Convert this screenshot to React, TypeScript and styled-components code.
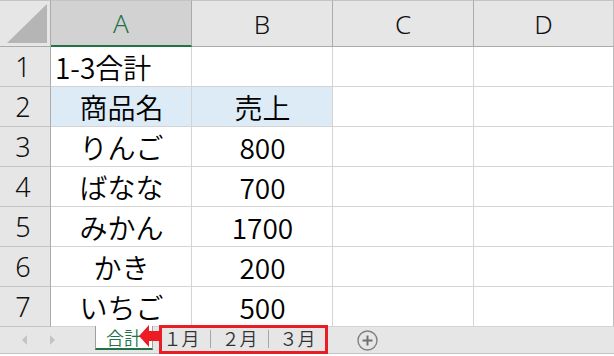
import { Fragment } from "react";
import styled, { createGlobalStyle } from "styled-components";

const GlobalStyle = createGlobalStyle`
  html, body {
    margin: 0;
    padding: 0;
    background: #ffffff;
  }
  * {
    box-sizing: border-box;
  }
`;

const GREEN = "#217346";
const RED = "#ec1c24";

type Row = { a: string; b: string; align?: "left" | "center"; fill?: boolean };

const rows: Row[] = [
  { a: "1-3合計", b: "", align: "left" },
  { a: "商品名", b: "売上", fill: true },
  { a: "りんご", b: "800" },
  { a: "ばなな", b: "700" },
  { a: "みかん", b: "1700" },
  { a: "かき", b: "200" },
  { a: "いちご", b: "500" },
];

const columns = ["A", "B", "C", "D"];

const Page = styled.div`
  width: 614px;
  height: 356px;
  background: #fff;
  overflow: hidden;
`;

const Grid = styled.div`
  display: grid;
  grid-template-columns: 51px 141px 141px 141px 140px;
  grid-template-rows: 47px repeat(7, 40px);
`;

const Corner = styled.div`
  background: #e6e6e6;
  border-top: 1px solid #c4c4c4;
  border-right: 1px solid #ababab;
  border-bottom: 1px solid #ababab;
  display: flex;
  align-items: flex-end;
  justify-content: flex-end;
  padding: 0 3px 3px 0;
`;

const ColHead = styled.div<{ $selected?: boolean; $last?: boolean }>`
  background: ${({ $selected }) => ($selected ? "#d2d2d2" : "#e6e6e6")};
  color: ${({ $selected }) => ($selected ? GREEN : "#111")};
  border-top: 1px solid #c4c4c4;
  border-right: 1px solid ${({ $last }) => ($last ? "#bdbdbd" : "#ababab")};
  border-bottom: ${({ $selected }) =>
    $selected ? `2px solid ${GREEN}` : "1px solid #ababab"};
  font-family: "Noto Sans", "Liberation Sans", sans-serif;
  font-size: 26px;
  font-weight: 300;
  display: flex;
  align-items: center;
  justify-content: center;
  padding-bottom: ${({ $selected }) => ($selected ? "1px" : "0")};
`;

const RowHead = styled.div`
  background: #e6e6e6;
  color: #111;
  border-right: 1px solid #ababab;
  border-bottom: 1px solid #c4c4c4;
  font-family: "Noto Sans", "Liberation Sans", sans-serif;
  font-size: 27px;
  font-weight: 300;
  display: flex;
  align-items: center;
  justify-content: center;
  padding-right: 4px;
`;

const Cell = styled.div<{ $fill?: boolean; $align?: string; $last?: boolean }>`
  background: ${({ $fill }) => ($fill ? "#ddebf7" : "#ffffff")};
  border-right: 1px solid ${({ $last }) => ($last ? "#bdbdbd" : "#d4d4d4")};
  border-bottom: 1px solid #d4d4d4;
  font-family: "Noto Sans CJK JP", "Noto Sans", sans-serif;
  font-size: 28px;
  font-weight: 350;
  line-height: 1;
  color: #000;
  display: flex;
  align-items: center;
  justify-content: ${({ $align }) => ($align === "left" ? "flex-start" : "center")};
  padding: 0 3px 0 4px;
  white-space: nowrap;
`;

const TabBar = styled.div`
  position: relative;
  display: flex;
  align-items: flex-start;
  height: 27px;
  background: #e6e6e6;
  border-bottom: 1px solid #c4c4c4;
`;

const Nav = styled.div`
  width: 95px;
  height: 26px;
  display: flex;
  align-items: center;
  gap: 23px;
  padding-left: 22px;
`;

const NavArrow = styled.span<{ $dir: "left" | "right" }>`
  width: 0;
  height: 0;
  border-top: 5px solid transparent;
  border-bottom: 5px solid transparent;
  ${({ $dir }) =>
    $dir === "left"
      ? "border-right: 5px solid #c3c3c3;"
      : "border-left: 5px solid #c3c3c3;"}
`;

const ActiveTab = styled.div`
  width: 58px;
  height: 24px;
  margin-top: -1px;
  background: #fff;
  border-left: 1px solid #9f9f9f;
  border-right: 1px solid #9f9f9f;
  border-bottom: 2px solid ${GREEN};
  color: ${GREEN};
  font-family: "Noto Sans CJK JP", sans-serif;
  font-size: 18px;
  font-weight: 350;
  display: flex;
  align-items: center;
  justify-content: center;
`;

const SheetTab = styled.div`
  width: 57px;
  height: 22px;
  color: #333;
  font-family: "Noto Sans CJK JP", sans-serif;
  font-size: 18px;
  font-weight: 350;
  display: flex;
  align-items: center;
  justify-content: center;
`;

const Divider = styled.span`
  width: 1px;
  height: 18px;
  margin-top: 3px;
  background: #a6a6a6;
`;

const AddButton = styled.span`
  margin: 3px 0 0 31px;
  display: flex;
`;

const Highlight = styled.div`
  position: absolute;
  left: 159px;
  top: -2px;
  width: 169px;
  height: 29px;
  border: 3px solid ${RED};
`;

const Arrow = styled.svg`
  position: absolute;
  left: 138px;
  top: -2px;
`;

export default function App() {
  return (
    <Page>
      <GlobalStyle />
      <Grid>
        <Corner>
          <svg width="40" height="39" viewBox="0 0 40 39">
            <polygon points="0,39 40,39 40,0" fill="#b5b5b5" />
          </svg>
        </Corner>
        {columns.map((c, i) => (
          <ColHead key={c} $selected={i === 0} $last={i === columns.length - 1}>
            {c}
          </ColHead>
        ))}
        {rows.map((r, i) => (
          <Fragment key={i}>
            <RowHead>{i + 1}</RowHead>
            <Cell $fill={r.fill} $align={r.align}>
              {r.a}
            </Cell>
            <Cell $fill={r.fill}>{r.b}</Cell>
            <Cell />
            <Cell $last />
          </Fragment>
        ))}
      </Grid>
      <TabBar>
        <Nav>
          <NavArrow $dir="left" />
          <NavArrow $dir="right" />
        </Nav>
        <ActiveTab>合計</ActiveTab>
        <SheetTab>１月</SheetTab>
        <Divider />
        <SheetTab>２月</SheetTab>
        <Divider />
        <SheetTab>３月</SheetTab>
        <AddButton>
          <svg width="21" height="21" viewBox="0 0 21 21">
            <circle cx="10.5" cy="10.5" r="9.5" fill="none" stroke="#808080" strokeWidth="1.4" />
            <path d="M10.5 5.5v10M5.5 10.5h10" stroke="#707070" strokeWidth="2" />
          </svg>
        </AddButton>
        <Highlight />
        <Arrow width="23" height="23" viewBox="0 0 23 23">
          <polygon points="1,11 11,0 11,6 23,6 23,16 11,16 11,22" fill={RED} />
        </Arrow>
      </TabBar>
    </Page>
  );
}
